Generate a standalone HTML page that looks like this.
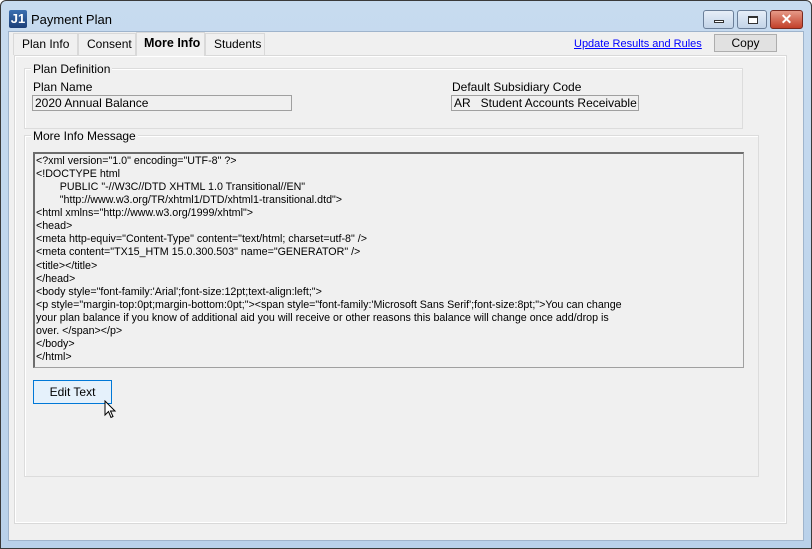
<!DOCTYPE html>
<html><head><style>
*{margin:0;padding:0;box-sizing:border-box}
body{width:812px;height:549px;background:#fff;font-family:"Liberation Sans",Arial,sans-serif;font-size:12px;color:#000;position:relative;overflow:hidden}
.a{position:absolute}
.frame{left:0;top:0;width:812px;height:549px;background:linear-gradient(#c7dbef,#b9d1ea);border:1px solid #3a3a3a;border-radius:6px 6px 0 0}
.client{left:8px;top:31px;width:796px;height:510px;background:#f0f0f0;border:1px solid #9fb4cc}
.tab{top:33px;height:22px;border:1px solid #d9d9d9;border-bottom:none;background:#f0f0f0;font-size:12px;line-height:20px;padding-left:8px}
.grp{border:1px solid #dcdcdc;box-shadow:inset 1px 1px 0 #fff}
.lg{background:#f0f0f0;padding:0 2px;font-size:12px;line-height:12px}
.tb{border:1px solid #a0a0a0;background:#f0f0f0;height:16px;line-height:14px;padding-left:2px;font-size:12px}
.btn{border:1px solid #adadad;background:#e1e1e1;text-align:center;font-size:12px}
.wb{top:10px;height:19px;border:1px solid #6b7f99;border-radius:3px;background:linear-gradient(#e6eef8,#c3d4e8)}
pre{font-family:"Liberation Sans",Arial,sans-serif;font-size:10.7px;line-height:13.07px;white-space:pre}
</style></head><body>
<div class="a frame"></div>
<div class="a" style="left:9px;top:10px;width:18px;height:18px;background:linear-gradient(#3b6fb0,#1c3f78);border-radius:2px;color:#fff;font-weight:bold;font-size:13px;line-height:18px;text-align:center">J1</div>
<div class="a" style="left:31px;top:12px;font-size:13px">Payment Plan</div>
<div class="a wb" style="left:703px;width:31px"><div class="a" style="left:10px;top:9px;width:10px;height:3px;border:1px solid #333;background:#fff"></div></div>
<div class="a wb" style="left:737px;width:30px"><div class="a" style="left:10px;top:5px;width:10px;height:8px;border:1px solid #333;border-top-width:2px;background:#fff"></div></div>
<div class="a" style="left:770px;top:10px;width:33px;height:19px;border:1px solid #7a2a20;border-radius:3px;background:linear-gradient(#e69a88,#c2402a);color:#fff;font-weight:bold;text-align:center;line-height:17px;font-size:14px">✕</div>
<div class="a client"></div>
<div class="a tab" style="left:13px;width:65px">Plan Info</div>
<div class="a tab" style="left:78px;width:58px">Consent</div>
<div class="a tab" style="left:205px;width:60px">Students</div>
<div class="a" style="left:14px;top:55px;width:773px;height:469px;border:1px solid #d9d9d9;background:#f0f0f0;box-shadow:inset 1px 1px 0 #fff,inset -1px -1px 0 #fff"></div>
<div class="a tab" style="left:136px;top:32px;width:69px;height:24px;background:#f0f0f0;border-color:#d9d9d9;font-weight:bold;font-size:12.5px;padding-left:7px">More Info</div>
<div class="a" style="left:574px;top:38px;color:#0000ff;text-decoration:underline;font-size:11px">Update Results and Rules</div>
<div class="a btn" style="left:714px;top:34px;width:63px;height:18px;line-height:16px">Copy</div>
<div class="a grp" style="left:24px;top:68px;width:719px;height:61px"></div>
<div class="a lg" style="left:31px;top:63px">Plan Definition</div>
<div class="a" style="left:33px;top:80px">Plan Name</div>
<div class="a tb" style="left:32px;top:95px;width:260px">2020 Annual Balance</div>
<div class="a" style="left:452px;top:80px">Default Subsidiary Code</div>
<div class="a tb" style="left:451px;top:95px;width:188px">AR&nbsp;&nbsp; Student Accounts Receivable</div>
<div class="a grp" style="left:24px;top:135px;width:735px;height:342px"></div>
<div class="a lg" style="left:31px;top:130px">More Info Message</div>
<div class="a" style="left:33px;top:152px;width:711px;height:216px;background:#f0f0f0;border:1px solid #a0a0a0;border-top:2px solid #6d6d6d;border-left:2px solid #6d6d6d"></div>
<pre class="a" style="left:36px;top:155px">&lt;?xml version="1.0" encoding="UTF-8" ?&gt;
&lt;!DOCTYPE html
        PUBLIC "-//W3C//DTD XHTML 1.0 Transitional//EN"
        "http://www.w3.org/TR/xhtml1/DTD/xhtml1-transitional.dtd"&gt;
&lt;html xmlns="http://www.w3.org/1999/xhtml"&gt;
&lt;head&gt;
&lt;meta http-equiv="Content-Type" content="text/html; charset=utf-8" /&gt;
&lt;meta content="TX15_HTM 15.0.300.503" name="GENERATOR" /&gt;
&lt;title&gt;&lt;/title&gt;
&lt;/head&gt;
&lt;body style="font-family:'Arial';font-size:12pt;text-align:left;"&gt;
&lt;p style="margin-top:0pt;margin-bottom:0pt;"&gt;&lt;span style="font-family:'Microsoft Sans Serif';font-size:8pt;"&gt;You can change
your plan balance if you know of additional aid you will receive or other reasons this balance will change once add/drop is
over. &lt;/span&gt;&lt;/p&gt;
&lt;/body&gt;
&lt;/html&gt;</pre>
<div class="a" style="left:33px;top:380px;width:79px;height:24px;border:1px solid #0078d7;background:#e5f1fb;text-align:center;line-height:22px">Edit Text</div>
<svg class="a" style="left:104px;top:400px" width="14" height="20" viewBox="0 0 14 20"><path d="M1 1 L1 15 L4.5 11.5 L7 17.5 L9 16.5 L6.5 11 L11 11 Z" fill="#fff" stroke="#000" stroke-width="1"/></svg>
</body></html>
